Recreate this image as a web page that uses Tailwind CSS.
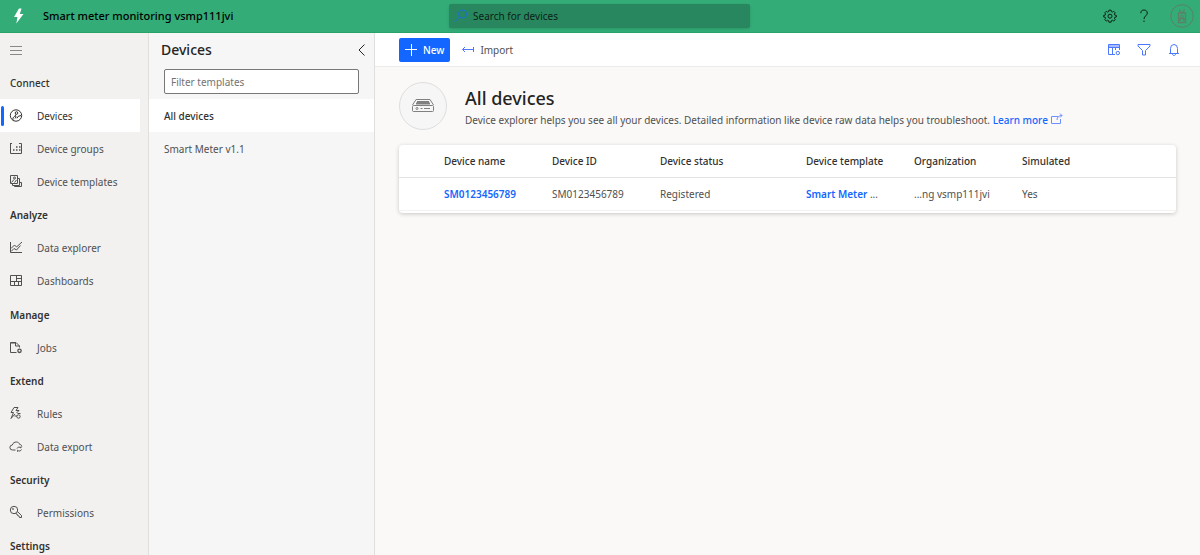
<!DOCTYPE html>
<html lang="en">
<head>
<meta charset="utf-8">
<meta name="viewport" content="width=device-width, initial-scale=1">
<title>Smart meter monitoring vsmp111jvi</title>
<script src="https://cdn.jsdelivr.net/npm/@tailwindcss/browser@4"></script>
</head>
<body class="flex h-screen flex-col overflow-hidden bg-[#faf9f8] font-['Noto_Sans','Open_Sans',sans-serif] text-[10px] leading-4 text-[#505050]">

<header class="grid h-[33px] shrink-0 grid-cols-[1fr_300px_1fr] items-center border-b border-[#27a368] bg-[#33ac77] text-[#0c1f16]">
  <div class="flex items-center gap-4 pl-[11px]">
    <svg class="size-4 text-white" viewBox="0 0 16 16" fill="currentColor"><path d="M8 .5 3 9h3.500L5.300 15.500 12.500 6H8.800L10.500.5Z"/></svg>
    <h1 class="text-[11px] font-medium text-black">Smart meter monitoring vsmp111jvi</h1>
  </div>
  <label class="-ml-px flex h-6 items-center gap-1 rounded-xs bg-[#28875e] px-1 shadow-sm">
    <svg class="size-4 text-[#1a6fe0]" viewBox="0 0 16 16" fill="none" stroke="currentColor"><circle cx="9.500" cy="6" r="4"/><path d="m6.500 9-5 5"/></svg>
    <input type="text" aria-label="Search for devices" placeholder="Search for devices" class="min-w-0 flex-1 bg-transparent outline-none placeholder:text-[#0c1f16]">
  </label>
  <div class="flex items-center justify-end gap-[18px] pr-1.5">
    <button aria-label="Settings"><svg class="block size-4" viewBox="0 0 16 16" fill="none" stroke="currentColor"><path stroke-linejoin="round" d="M6.900 2.200h2.200l.3 1.500 1 .4 1.300-.8 1.500 1.500-.8 1.300.4 1 1.500.3v1.600l-1.500.3-.4 1 .8 1.300-1.500 1.500-1.300-.8-1 .4-.3 1.500H6.900l-.3-1.500-1-.4-1.300.8-1.500-1.500.8-1.300-.4-1-1.500-.3V7.400l1.500-.3.400-1-.800-1.300 1.500-1.500 1.300.8 1-.4Z"/><circle cx="8" cy="8.200" r="2"/></svg></button>
    <button aria-label="Help"><svg class="block size-4" viewBox="0 0 16 16" fill="none" stroke="currentColor"><path d="M4.800 5.200C4.800 3 6 2 8 2s3.300 1.200 3.300 3c0 2.700-3.300 3-3.300 6M8 12.500V14"/></svg></button>
    <button aria-label="Account"><svg class="block size-6 text-[#5c8069]" viewBox="0 0 24 24" fill="none" stroke="currentColor"><circle cx="12" cy="12" r="11.300"/><path stroke-width="1.300" d="M8.500 9h7v9.500h-7ZM9.500 5.500l1.500 3M14.500 5.500l-1.500 3M10 17v-2.500h4V17"/><circle cx="12" cy="12.500" r="1.400"/></svg></button>
  </div>
</header>

<div class="flex min-h-0 flex-1">
  <nav aria-label="Main" class="w-[149px] shrink-0 overflow-hidden border-r border-[#e1dfdd] bg-[#f2f1f0]">
    <button aria-label="Toggle navigation" class="flex h-[33px] items-center px-2.5 text-[#8a8886]"><svg class="size-3" viewBox="0 0 12 12" stroke="currentColor" shape-rendering="crispEdges"><path d="M0 2.500h12M0 6.500h12M0 10.500h12"/></svg></button>

    <h2 class="flex h-[33px] items-center px-2.5 font-medium text-[#323130]">Connect</h2>
    <a href="#" aria-current="page" class="relative mr-2 flex h-[33px] items-center gap-[13px] bg-white px-2 text-[#323130]">
      <span class="absolute left-px h-5 w-[3px] rounded-full bg-[#1366ff]"></span>
      <svg class="size-4" viewBox="0 0 16 16" fill="none" stroke="currentColor"><circle cx="8" cy="7.500" r="5.700"/><circle cx="8.500" cy="5" r="1.300"/><path d="m8 6.300-1 2M5.500 12.500c-.8-1-.8-2.500.2-3.500s2-.8 2.500-.3L7 10.500M9 10.300l1.200-2 3-.8"/></svg>
      Devices</a>
    <a href="#" class="flex h-[33px] items-center gap-[13px] px-2">
      <svg class="size-4" viewBox="0 0 16 16" fill="none" stroke="currentColor"><path d="M2.500 2v10.500h11V2.500H11M2.500 2.500H4"/><path stroke-width="1.500" d="M5 9h1.500M8 9h1.500M11 9h1.500M8 6h1.500M11 6h1.500"/></svg>
      Device groups</a>
    <a href="#" class="flex h-[33px] items-center gap-[13px] px-2">
      <svg class="size-4" viewBox="0 0 16 16" fill="none" stroke="currentColor"><path d="M2.500 1.500h7v8h-7ZM9.500 4.500h2v7h-7v-2M11.500 8.500h2v4h-7v-1"/><circle cx="6.500" cy="4" r="1"/><path d="M3.500 8.500 6 5.500M6.500 8.500l2-2.500"/></svg>
      Device templates</a>

    <h2 class="flex h-[33px] items-center px-2.5 font-semibold text-[#323130]">Analyze</h2>
    <a href="#" class="flex h-[33px] items-center gap-[13px] px-2">
      <svg class="size-4" viewBox="0 0 16 16" fill="none" stroke="currentColor"><path d="M2.500 2v10.500H14M3 8.500 6.500 5l2 2L14 2M3 11.500 6 8.500l2.500 1.500 4-4.500"/></svg>
      Data explorer</a>
    <a href="#" class="flex h-[33px] items-center gap-[13px] px-2">
      <svg class="size-4" viewBox="0 0 16 16" fill="none" stroke="currentColor"><path d="M2.500 2.500h11v10h-11ZM8.500 2.500v6M2.500 8.500h11M8.500 5.500h5M6.500 8.500v4M10.500 8.500v4"/></svg>
      Dashboards</a>

    <h2 class="mt-px flex h-[33px] items-center px-2.5 font-semibold text-[#323130]">Manage</h2>
    <a href="#" class="flex h-[33px] items-center gap-[13px] px-2">
      <svg class="size-4" viewBox="0 0 16 16" fill="none" stroke="currentColor"><path d="M8.500 12.500h-6v-10H8l3.500 3.500v1.500M7.500 2.500V6h4M4 2.500V4M6 2.500V4"/><circle cx="11.500" cy="10.800" r="1.700" stroke-width="1.300"/></svg>
      Jobs</a>

    <h2 class="flex h-[33px] items-center px-2.5 font-semibold text-[#323130]">Extend</h2>
    <a href="#" class="flex h-[33px] items-center gap-[13px] px-2">
      <svg class="size-4" viewBox="0 0 16 16" fill="none" stroke="currentColor"><path d="M6 1.500 3 6.500h2.500L3 12.500l4-4.500M6 1.500h4L8 4.500h3L8.500 7M6.500 10H9"/><circle cx="10.500" cy="10.500" r="1.700"/><path d="M9.500 7.500h3"/></svg>
      Rules</a>
    <a href="#" class="flex h-[33px] items-center gap-[13px] px-2">
      <svg class="size-4" viewBox="0 0 16 16" fill="none" stroke="currentColor"><path d="M7.500 11H4.500a2.500 2.500 0 0 1-.2-5C5 3.800 6.700 3 8.300 3c1.800 0 3 1 3.400 2.500 1.200 0 2 .8 2.100 2"/><path d="M9 9.500c.4-1.400 2.800-2 4-.5V7.500M13.500 10.500c-.6 1.700-2.800 2-4 .7v1.500"/></svg>
      Data export</a>

    <h2 class="flex h-[33px] items-center px-2.5 font-semibold text-[#323130]">Security</h2>
    <a href="#" class="flex h-[33px] items-center gap-[13px] px-2">
      <svg class="size-4" viewBox="0 0 16 16" fill="none" stroke="currentColor"><circle cx="6" cy="5" r="3.700"/><circle cx="5" cy="4" r=".5"/><path d="m7.500 8.500 1.500.5.500 1.500 1.500.5.500 1.500h2v-2L9.400 6.500"/></svg>
      Permissions</a>

    <h2 class="flex h-[33px] items-center px-2.5 font-semibold text-[#323130]">Settings</h2>
  </nav>

  <aside class="w-[226px] shrink-0 border-r border-[#e1dfdd] bg-[#f6f6f6]">
    <div class="flex h-[34px] items-center justify-between pr-1.5 pl-3 text-[#242424]">
      <h2 class="text-sm font-medium">Devices</h2>
      <button aria-label="Collapse panel"><svg class="block size-3" viewBox="0 0 12 12" fill="none" stroke="currentColor"><path d="M8.500.5 3 6l5.500 5.500"/></svg></button>
    </div>
    <div class="h-8 px-[15px] pt-0.5">
      <input type="text" aria-label="Filter templates" placeholder="Filter templates" class="block h-[25px] w-full rounded-xs border border-[#7a7876] bg-white px-1.5 outline-none placeholder:text-[#757371]">
    </div>
    <a href="#" class="flex h-[33px] items-center bg-white px-[15px] font-medium text-[#323130]">All devices</a>
    <a href="#" class="flex h-[33px] items-center px-[15px]">Smart Meter v1.1</a>
  </aside>

  <main class="min-w-0 flex-1">
    <div class="flex h-[34px] items-center justify-between border-b border-[#edebe9] bg-white pr-[18px] pl-6">
      <div class="flex items-center gap-3">
        <button class="flex h-6 items-center gap-1.5 rounded-xs bg-[#1366ff] px-1.5 font-medium text-white"><svg class="size-3" viewBox="0 0 12 12" stroke="currentColor"><path d="M6.500 0v12M0 5.500h12"/></svg>New</button>
        <button class="flex items-center gap-1.5"><svg class="h-3 w-3 text-[#4c78ff]" viewBox="0 0 12 12" fill="none" stroke="currentColor"><path d="M.5 5.500H11M3 3 .5 5.500 3 8M11.500 3v5"/></svg>Import</button>
      </div>
      <div class="flex items-center gap-3.5 text-[#4c78ff]">
        <button aria-label="Column options"><svg class="block size-4" viewBox="0 0 16 16" fill="none" stroke="currentColor"><path d="M9 12.500H2.500v-10h11V8M2.500 5.500h11M6.500 5.500v7M9.500 5.500V8"/><path d="M2.500 4h11"/><circle cx="11.800" cy="11" r="1.700"/></svg></button>
        <button aria-label="Filter"><svg class="block size-4" viewBox="0 0 16 16" fill="none" stroke="currentColor"><path d="M2 2.500h12V4L9.500 8.500v4.500h-3V8.500L2 4Z"/></svg></button>
        <button aria-label="Notifications"><svg class="block size-4" viewBox="0 0 16 16" fill="none" stroke="currentColor"><path d="M3 11.500h10M4.500 11.500v-5a3.500 4 0 0 1 7 0v5M6.500 12c0 2 3 2 3 0"/></svg></button>
      </div>
    </div>

    <section class="px-6 pt-[15px]">
      <div class="flex gap-[18px]">
        <div class="grid size-12 shrink-0 place-items-center rounded-full border border-[#dedede] bg-[#f6f6f6] text-[#808080]">
          <svg class="h-4 w-6" viewBox="0 0 24 16" fill="none" stroke="currentColor"><path d="M1.500 7 5 1.500h14L22.500 7"/><path stroke-width="2" d="M6 4h12M5 5.500h14"/><rect x="1.500" y="7.500" width="21" height="6" rx="1"/><circle cx="6" cy="10.500" r="1"/><path d="M9.500 10.500h2M13 10.500h6"/></svg>
        </div>
        <div class="pt-1">
          <h2 class="text-lg leading-6 font-medium text-[#242424]">All devices</h2>
          <p class="pt-0.5">Device explorer helps you see all your devices. Detailed information like device raw data helps you troubleshoot. <a href="#" class="font-medium whitespace-nowrap text-[#1366ff]">Learn more <svg class="inline-block h-3 w-3 -translate-y-0.5" viewBox="0 0 12 12" fill="none" stroke="#6f90ff"><path d="M7 3.500H.5v7h9V6M6 7c0-3 2-4.500 5-4.500M9 .5l2 2-2 2"/></svg></a></p>
        </div>
      </div>

      <div class="mt-[15px] overflow-hidden rounded-sm bg-white pb-0.5 shadow-[0_1px_4px_rgba(0,0,0,0.2)]">
        <table class="w-full table-fixed text-left whitespace-nowrap">
          <colgroup><col class="w-[45px]"><col class="w-[108px]"><col class="w-[108px]"><col class="w-[146px]"><col class="w-[108px]"><col class="w-[108px]"><col></colgroup>
          <thead>
            <tr class="h-8 border-b border-[#e5e4e3] text-[#323130]">
              <td></td><th scope="col" class="font-medium">Device name</th><th scope="col" class="font-medium">Device ID</th><th scope="col" class="font-medium">Device status</th><th scope="col" class="font-medium">Device template</th><th scope="col" class="font-medium">Organization</th><th scope="col" class="font-medium">Simulated</th>
            </tr>
          </thead>
          <tbody>
            <tr class="h-[33px] border-b border-[#f3f2f1]">
              <td></td>
              <td><a href="#" class="font-semibold text-[#1366ff]">SM0123456789</a></td>
              <td>SM0123456789</td>
              <td>Registered</td>
              <td><a href="#" class="font-semibold text-[#1366ff]">Smart Meter</a> ...</td>
              <td>...ng vsmp111jvi</td>
              <td>Yes</td>
            </tr>
          </tbody>
        </table>
      </div>
    </section>
  </main>
</div>
</body>
</html>
